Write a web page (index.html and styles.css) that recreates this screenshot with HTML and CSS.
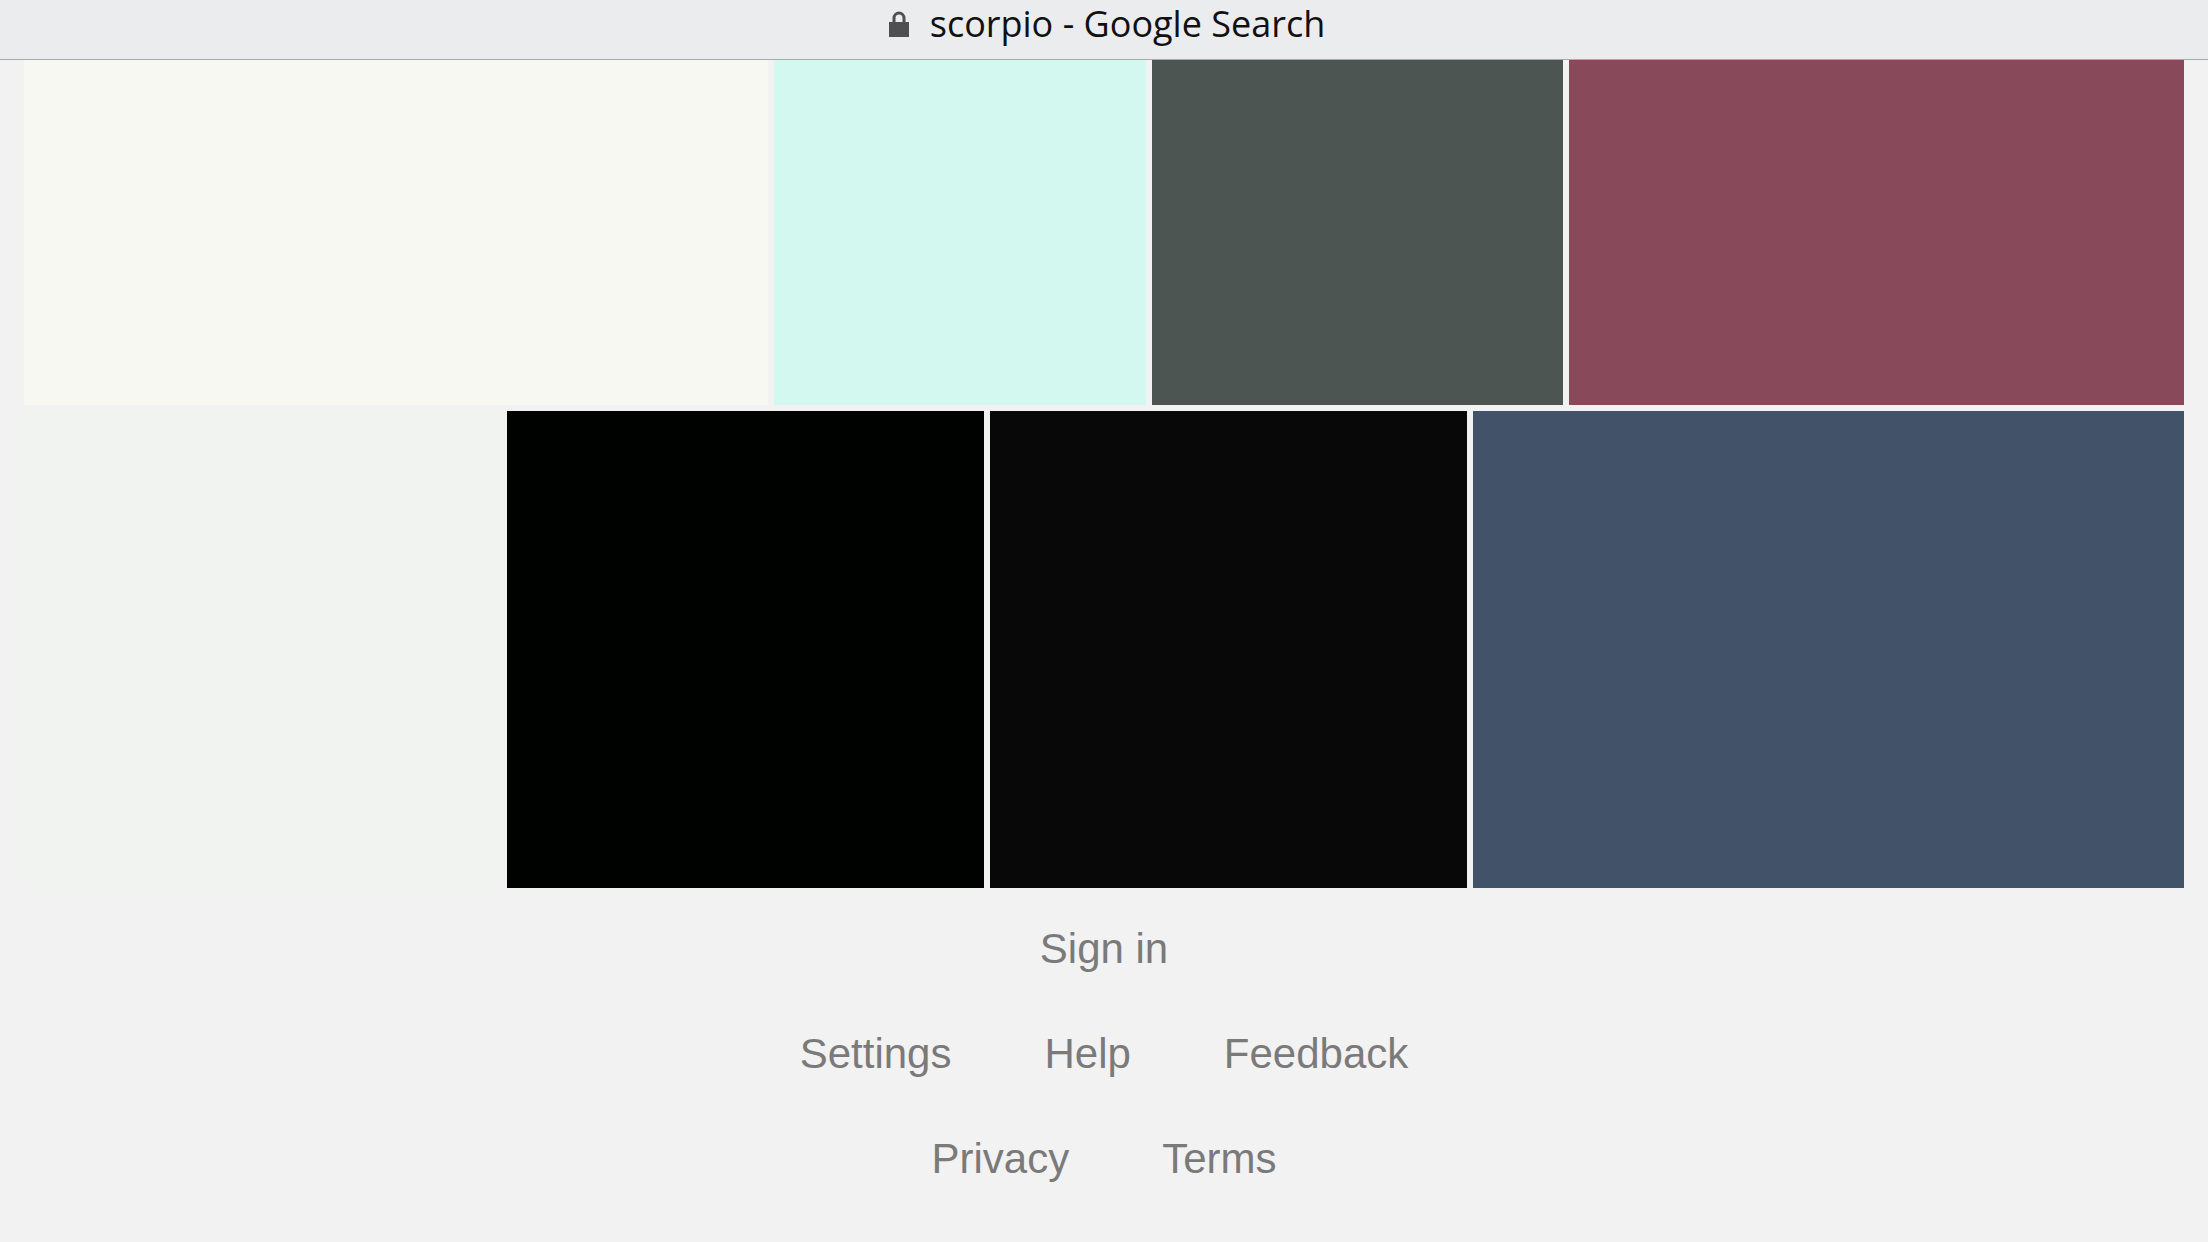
FILE: index.html
```html
<!DOCTYPE html>
<html lang="en">
<head>
  <meta charset="UTF-8">
  <title>scorpio - Google Search</title>
  <link rel="stylesheet" href="styles.css">
</head>
<body>

  <header class="address-bar">
    <svg class="lock" viewBox="0 0 20 26" width="20" height="26" aria-hidden="true">
      <path d="M0 11h20v15H0z M3.5 11V7a6.5 6.5 0 0 1 13 0v4h-3V7a3.5 3.5 0 0 0-7 0v4z"/>
    </svg>
    <span class="address-title">scorpio - Google Search</span>
  </header>

  <main class="results">
    <div class="tile-row is-top">
      <div class="tile is-cream"></div>
      <div class="tile is-mint"></div>
      <div class="tile is-slate"></div>
      <div class="tile is-wine"></div>
    </div>
    <div class="tile-row is-bottom">
      <div class="tile is-pale"></div>
      <div class="tile is-black"></div>
      <div class="tile is-ink"></div>
      <div class="tile is-navy"></div>
    </div>
  </main>

  <footer class="footer">
    <nav class="footer-row is-signin">
      <a class="footer-link" href="#">Sign in</a>
    </nav>
    <nav class="footer-row">
      <a class="footer-link" href="#">Settings</a>
      <a class="footer-link" href="#">Help</a>
      <a class="footer-link" href="#">Feedback</a>
    </nav>
    <nav class="footer-row">
      <a class="footer-link" href="#">Privacy</a>
      <a class="footer-link" href="#">Terms</a>
    </nav>
  </footer>

</body>
</html>
```

FILE: styles.css
```css
html, body {
  height: 100%;
}
body {
  margin: 0;
  overflow: hidden;
  background: #f2f2f2;
  font-family: "Liberation Sans", Arial, sans-serif;
}

.address-bar {
  display: flex;
  justify-content: center;
  align-items: center;
  gap: 21px;
  height: 47px;
  padding: 0 0 12px 6px;
  border-bottom: 1px solid #a9a9a9;
  background: #ebecee;
}
.lock {
  fill: #505050;
}
.address-title {
  font-family: "Open Sans", sans-serif;
  font-size: 36px;
  color: #111;
}

.results {
  display: flex;
  flex-direction: column;
  gap: 6px;
  padding: 0 24px;
}
.tile-row {
  display: grid;
  gap: 6px;
}
.tile-row.is-top {
  grid-template-columns: 744px 372px 411px 615px;
  height: 345px;
}
.tile-row.is-bottom {
  grid-template-columns: 477px 477px 477px 711px;
  height: 477px;
}
.tile.is-cream { background: #f7f8f2; }
.tile.is-mint  { background: #d2f8f0; }
.tile.is-slate { background: #4c5552; }
.tile.is-wine  { background: #88495a; }
.tile.is-pale  { background: #f1f3f0; }
.tile.is-black { background: #000200; }
.tile.is-ink   { background: #080808; }
.tile.is-navy  { background: #425369; }

.footer {
  padding-top: 8px;
}
.footer-row {
  display: flex;
  justify-content: center;
  gap: 93px;
  height: 105px;
  line-height: 105px;
}
.footer-link {
  font-size: 42px;
  color: #7a7a7a;
  text-decoration: none;
}
```
